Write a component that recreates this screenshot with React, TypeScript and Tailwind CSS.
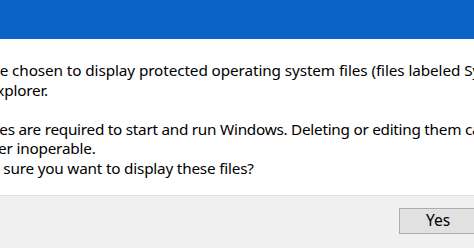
import React from 'react';

// the dialog is cropped on the left; each line is shifted so the cut falls where the screenshot cuts it
const block1 = [
  { text: 'You have chosen to display protected operating system files (files labeled System and Hidden) in File', cls: '-ml-[56px] tracking-[-0.1px]' },
  { text: 'Explorer.', cls: '-ml-[12px]' },
];

const block2 = [
  { text: 'These files are required to start and run Windows. Deleting or editing them can make your', cls: '-ml-[58px] tracking-[-0.26px]' },
  { text: 'computer inoperable.', cls: '-ml-[56px]' },
  { text: 'Are you sure you want to display these files?', cls: '-ml-[54px]' },
];

export default function App() {
  return (
    <div
      className="w-[474px] h-[248px] overflow-hidden bg-white flex flex-col text-black"
      style={{ fontFamily: '"Noto Sans", "Segoe UI", sans-serif' }}
    >
      {/* Title bar */}
      <div className="h-[39px] shrink-0 bg-[#0a64c8]" />

      {/* Message */}
      <div className="flex-1 pt-[22px] text-[15.3px] leading-[19.5px] tracking-[-0.2px] whitespace-nowrap">
        {block1.map((l) => (
          <div key={l.text} className={l.cls}>
            {l.text}
          </div>
        ))}
        <div className="h-[19.5px]" />
        {block2.map((l) => (
          <div key={l.text} className={l.cls}>
            {l.text}
          </div>
        ))}
      </div>

      {/* Footer */}
      <div className="h-[53px] shrink-0 bg-[#f0f0f0] border-t border-[#dfdfdf] flex items-start pt-[12px] pl-[399px]">
        <button className="w-[78px] h-[26px] shrink-0 bg-[#e1e1e1] border border-[#adadad] text-[15.5px] leading-none text-black">
          Yes
        </button>
      </div>
    </div>
  );
}
